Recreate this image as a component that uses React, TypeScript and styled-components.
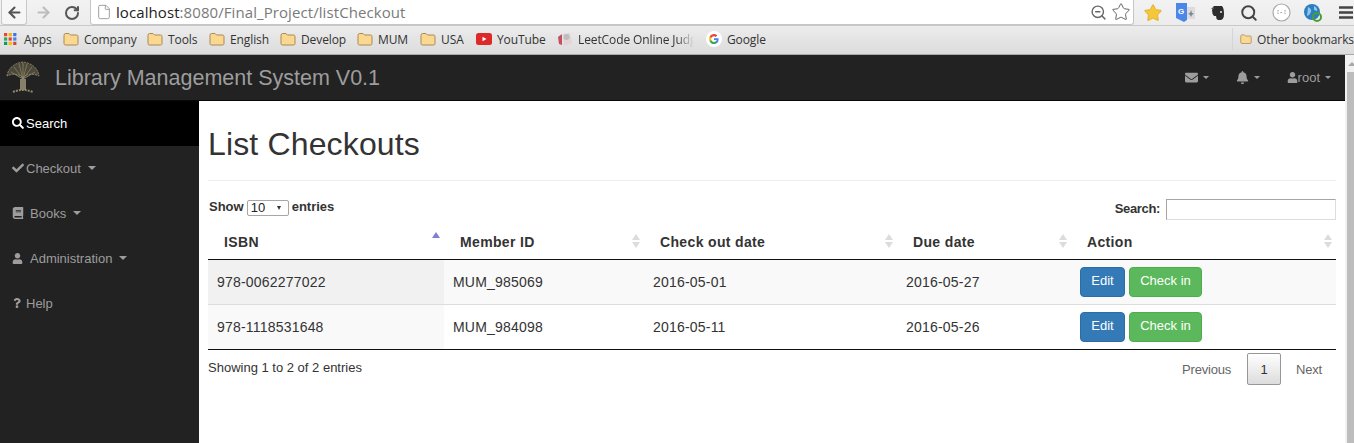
import React from "react";
import styled, { createGlobalStyle } from "styled-components";
import { FaSearch, FaCheck, FaBook, FaUser, FaQuestion, FaEnvelope, FaBell } from "react-icons/fa";
import { ArrowLeft, ArrowRight, RotateCw, Search as SearchIcon, Star, File as FileIcon, ZoomOut } from "lucide-react";

const Global = createGlobalStyle`
  html, body { margin: 0; padding: 0; width: 1354px; height: 443px; overflow: hidden; background: #fff; }
  * { box-sizing: border-box; }
  body { font-family: "Liberation Sans", Arial, sans-serif; font-size: 14px; color: #333; }
`;

const Page = styled.div`
  width: 1354px; height: 443px; display: flex; flex-direction: column; overflow: hidden;
`;
const Toolbar = styled.div`
  height: 26px; flex: none; display: flex; align-items: flex-start;
  background: linear-gradient(#f2f2f2, #ececec);
  padding-left: 1px;
`;
const NavButton = styled.div<{ $active?: boolean }>`
  width: 26px; height: 25px; display: flex; align-items: center; justify-content: center; flex: none;
  margin-right: 3px;
  border-radius: 0 0 3px 3px;
  color: ${p => (p.$active ? "#555" : "#bdbdbd")};
  ${p => p.$active && "background:#f6f6f6;border:1px solid #c8c8c8;border-top:0;"}
`;
const PlainNav = styled(NavButton)`
  color: ${p => (p.$active ? "#555" : "#bdbdbd")}; background: none; border: 0;
`;
const Omnibox = styled.div`
  margin-left: 2px; width: 1044px; height: 25px; background: #fff; border: 1px solid #c6c6c6; border-top: 0;
  border-radius: 0 0 3px 3px; display: flex; align-items: center; padding: 0 2px 0 5px;
  font-family: "Open Sans", sans-serif; font-size: 15px; letter-spacing: 0.08px; color: #7a7a7a; white-space: nowrap;
`;
const PageGlyph = styled.span`
  display: flex; width: 20px; color: #999; flex: none;
`;
const Host = styled.span`color: #222;`;
const OmniActions = styled.span`
  margin-left: auto; display: flex; align-items: center; gap: 4px; color: #666;
`;
const Extensions = styled.div`
  display: flex; align-items: center; height: 25px; margin-left: 6px;
`;
const Ext = styled.span<{ $w: number }>`
  width: ${p => p.$w}px; display: flex; justify-content: center; align-items: center; flex: none;
`;
const MenuExt = styled(Ext)`
  justify-content: flex-end; padding-right: 1px;
`;
const Bookmarks = styled.div`
  height: 30px; flex: none; display: flex; align-items: center; padding: 0 0 2px 4px;
  background: linear-gradient(#ececec, #dcdcdc); border-top: 1px solid #c8c8c8; border-bottom: 1px solid #a9a9a9;
  margin-top: -1px;
  font-family: "Open Sans", sans-serif; font-size: 12px; letter-spacing: -0.1px; color: #333; white-space: nowrap;
`;
const Bookmark = styled.span<{ $w: number }>`
  display: flex; align-items: center; width: ${p => p.$w}px; flex: none; gap: 5px; overflow: hidden;
`;
const Faded = styled.span`
  width: 116px; overflow: hidden; flex: none;
  -webkit-mask-image: linear-gradient(90deg, #000 85%, transparent);
  mask-image: linear-gradient(90deg, #000 85%, transparent);
`;
const OtherBookmarks = styled.span`
  margin-left: auto; display: flex; align-items: center; gap: 5px; border-left: 1px solid #cfd6dc; padding-left: 7px; height: 22px; width: 122px; flex: none; overflow: hidden;
`;
const Site = styled.div`
  flex: 1; display: flex; min-height: 0;
`;
const Content = styled.div`
  flex: 1; min-width: 0; display: flex; flex-direction: column;
`;
const Scrollbar = styled.div`
  width: 9px; flex: none; background: #f1f1f1; padding-left: 2px; display: flex; flex-direction: column;
`;
const ScrollArrow = styled.div`
  flex: none; margin: 7px 0 0 1px; width: 0; height: 0; border-left: 4px solid transparent; border-right: 4px solid transparent; border-bottom: 4px solid #a8a8a8;
`;
const ScrollThumb = styled.div`
  margin-top: 6px; width: 100%; flex: 1; background: #bdbdbd;
`;
const Navbar = styled.div`
  height: 46px; flex: none; display: flex; align-items: center; background: #222; border-bottom: 1px solid #080808; color: #9d9d9d;
`;
const Logo = styled.svg`
  width: 38px; height: 38px; margin-left: 4px; flex: none;
`;
const Brand = styled.div`
  margin-left: 13px; font-size: 21.5px; line-height: 46px; white-space: nowrap;
`;
const NavRight = styled.div`
  margin-left: auto; display: flex; align-items: center; padding-right: 14px; font-size: 13px;
`;
const NavItem = styled.span<{ $gap: number }>`
  display: flex; align-items: center; margin-left: ${p => p.$gap}px;
`;
const Caret = styled.span<{ $size?: number; $left?: number }>`
  display: inline-block; width: 0; height: 0; margin-left: ${p => p.$left ?? 5}px;
  border-left: ${p => p.$size ?? 3}px solid transparent; border-right: ${p => p.$size ?? 3}px solid transparent;
  border-top: ${p => p.$size ?? 3}px solid currentColor;
`;
const Body = styled.div`
  flex: 1; display: flex; min-height: 0;
`;
const Sidebar = styled.aside`
  width: 199px; flex: none; background: #222; color: #9d9d9d; font-size: 13px;
`;
const SideItem = styled.div<{ $active?: boolean }>`
  height: 45px; display: flex; align-items: center; padding: 0 0 1px 12px; white-space: nowrap;
  ${p => p.$active ? "background:#000;color:#fff;" : ""}
`;
const SideIcon = styled.span<{ $w: number }>`
  display: flex; width: ${p => p.$w}px; flex: none;
`;
const Main = styled.main`
  flex: 1; min-width: 0; padding: 0 9px; background: #fff;
`;
const Title = styled.h1`
  margin: 0; height: 80px; padding-top: 25px; border-bottom: 1px solid #eee; font-size: 32px; letter-spacing: 0.15px; font-weight: 400; line-height: 36px; color: #333;
`;
const Controls = styled.div`
  display: flex; justify-content: space-between; align-items: flex-start; height: 43px; padding-top: 17px; padding-left: 1px; font-size: 13px; font-weight: 700;
`;
const ControlLabel = styled.label`
  display: flex; align-items: center; gap: 3px; line-height: 18px;
`;
const SearchLabel = styled(ControlLabel)`
  gap: 4px; letter-spacing: -0.35px;
`;
const FakeSelect = styled.span`
  width: 42px; height: 16px; border: 1px solid #a6a6a6; border-radius: 2px; display: flex; align-items: center; justify-content: space-between; padding: 0 7px 0 3px; font-weight: 400; font-size: 13px; color: #222; margin-top: 1px;
`;
const SelectArrow = styled.span`
  width: 0; height: 0; border-left: 2.5px solid transparent; border-right: 2.5px solid transparent; border-top: 4px solid #333;
`;
const SearchField = styled.span`
  width: 170px; height: 21px; margin-left: 2px; margin-top: 1px; background: #fff; border: 1px solid #ddd; border-top-color: #a5a5a5; border-left-color: #a5a5a5;
`;
const Table = styled.table`
  width: 100%; border-collapse: separate; border-spacing: 0; table-layout: fixed; font-size: 14px;
`;
const Head = styled.th<{ $w: number }>`
  width: ${p => p.$w}px; height: 36px; padding: 0 0 0 16px; text-align: left; font-weight: 700; letter-spacing: 0.35px; border-bottom: 1px solid #111; position: relative;
`;
const Sort = styled.svg<{ $active?: boolean }>`
  position: absolute; right: 4px; top: ${p => (p.$active ? 8 : 10)}px; width: 8px; height: 14px;
`;
const Row = styled.tr<{ $odd: boolean }>`
  background: ${p => (p.$odd ? "#f9f9f9" : "#fff")};
`;
const Cell = styled.td<{ $sorted?: boolean; $odd?: boolean; $last?: boolean }>`
  height: 45px; padding: 0 0 0 9px; vertical-align: middle; color: #333; letter-spacing: 0.2px;
  border-bottom: 1px solid ${p => (p.$last ? "#111" : "#ddd")};
  ${p => p.$sorted && `background: ${p.$odd ? "#f1f1f1" : "#f9f9f9"};`}
`;
const Btn = styled.span<{ $green?: boolean }>`
  display: inline-flex; align-items: center; justify-content: center; height: 30px; width: ${p => (p.$green ? 73 : 45)}px; padding-bottom: 4px; margin-right: 4px; border-radius: 4px; color: #fff; font-size: 13px; letter-spacing: 0; white-space: nowrap;
  background: ${p => (p.$green ? "#5cb85c" : "#337ab7")}; border: 1px solid ${p => (p.$green ? "#4cae4c" : "#2e6da4")};
`;
const Footer = styled.div`
  display: flex; justify-content: space-between; align-items: flex-start; padding-top: 3px; color: #333; font-size: 13px;
`;
const Info = styled.span`
  margin-top: 6px; line-height: 18px; font-size: 13px;
`;
const Pager = styled.div`
  display: flex; align-items: center; color: #666; font-size: 13px; letter-spacing: -0.2px; padding-right: 14px;
`;
const PageNumber = styled.span`
  width: 34px; height: 32px; margin: 0 15px 0 16px; display: flex; align-items: center; justify-content: center; color: #333; border: 1px solid #979797; border-radius: 2px; background: linear-gradient(#fff, #dcdcdc);
`;

const Folder = () => (
  <svg width="16" height="14" viewBox="0 0 16 14">
    <path d="M1 3.5 Q1 1.5 2.5 1.5 H6 L7.5 3 H13.5 Q15 3 15 4.5 V11.5 Q15 13 13.5 13 H2.5 Q1 13 1 11.5 Z" fill="#fbd88f" stroke="#a8895a" strokeWidth="1" />
  </svg>
);
const AppsGrid = () => (
  <svg width="15" height="14" viewBox="0 0 15 14">
    {["#e8453c","#f4b400","#3b78e7","#34a853","#ea4335","#4285f4","#0f9d58","#fbbc05","#db4437"].map((c, i) => (
      <rect key={i} x={(i % 3) * 4.6} y={1 + Math.floor(i / 3) * 4.4} width="3.2" height="3.2" fill={c} />
    ))}
  </svg>
);
const YouTube = () => (
  <svg width="16" height="12" viewBox="0 0 16 12">
    <rect width="16" height="12" rx="2.5" fill="#dc2a2a" />
    <path d="M6.5 3.8 L10.5 6 L6.5 8.2Z" fill="#fff" />
  </svg>
);
const Leet = () => (
  <svg width="16" height="16" viewBox="0 0 16 16">
    <path d="M1 6 L5 3 L5 14 L2 13Z" fill="#c2505e" />
    <path d="M6 3 L13 2 L15 12 L7 15Z" fill="#e5d3d5" />
    <circle cx="9.5" cy="6" r="3" fill="#bdbdbd" />
  </svg>
);
const GoogleG = () => (
  <svg width="16" height="16" viewBox="0 0 16 16">
    <circle cx="8" cy="8" r="8" fill="#fff" />
    <path d="M12.6 8.2c0-.4 0-.7-.1-1H8v1.8h2.6c-.1.7-.5 1.200-1 1.600v1.300h1.600c1-.9 1.400-2.200 1.400-3.700z" fill="#4285f4" />
    <path d="M8 13c1.300 0 2.400-.4 3.200-1.200l-1.600-1.200c-.4.300-1 .5-1.600.5-1.300 0-2.300-.8-2.700-2H3.700v1.300C4.500 12 6.100 13 8 13z" fill="#34a853" />
    <path d="M5.300 9.100c-.2-.7-.2-1.400 0-2.100V5.600H3.700c-.7 1.300-.7 3.100 0 4.800z" fill="#fbbc05" />
    <path d="M8 5.200c.7 0 1.300.2 1.800.7l1.400-1.400C10.400 3.500 9.300 3 8 3 6.100 3 4.500 4 3.700 5.600L5.300 7c.4-1.100 1.400-1.800 2.700-1.800z" fill="#ea4335" />
  </svg>
);
const Tree = () => (
  <Logo viewBox="0 0 38 38">
    <g stroke="#8d8668" fill="none" strokeWidth="1">
      <path d="M19 31 V18 M17 31 L17 20 M21 31 V20" strokeWidth="1.400" stroke="#b0a985" />
      <path d="M19 20 L7 13 M19 20 L10 8 M19 20 L15 5 M19 20 L19 4 M19 20 L23 5 M19 20 L28 8 M19 20 L31 13" />
      <path d="M3 17 Q5 5 19 3 Q33 5 35 17 Q27 13 19 18 Q11 13 3 17Z" fill="#6f6a50" fillOpacity=".55" strokeDasharray="2 1" />
      <path d="M9 33 Q19 29 29 33" strokeWidth="2" strokeDasharray="2 1" />
    </g>
  </Logo>
);
const SortIcon = ({ active }: { active?: boolean }) =>
  active ? (
    <Sort $active viewBox="0 0 8 14"><path d="M0 6 L4 0 L8 6Z" fill="#8080d0" /></Sort>
  ) : (
    <Sort viewBox="0 0 8 14">
      <path d="M0 6 L4 0 L8 6Z M0 8 L8 8 L4 14Z" fill="#dcdcdc" />
    </Sort>
  );

const rows = [
  ["978-0062277022", "MUM_985069", "2016-05-01", "2016-05-27"],
  ["978-1118531648", "MUM_984098", "2016-05-11", "2016-05-26"],
];
const heads: [string, number][] = [
  ["ISBN", 236],
  ["Member ID", 200],
  ["Check out date", 253],
  ["Due date", 174],
  ["Action", 265],
];

export default function App() {
  return (
    <Page>
      <Global />
      <Toolbar>
        <NavButton $active><ArrowLeft size={17} strokeWidth={3} /></NavButton>
        <PlainNav><ArrowRight size={17} strokeWidth={3} /></PlainNav>
        <PlainNav $active><RotateCw size={16} strokeWidth={3} /></PlainNav>
        <Omnibox>
          <PageGlyph><FileIcon size={16} strokeWidth={1.400} /></PageGlyph>
          <Host>localhost</Host>:8080/Final_Project/listCheckout
          <OmniActions>
            <ZoomOut size={17} strokeWidth={2} />
            <Star size={20} strokeWidth={1.200} />
          </OmniActions>
        </Omnibox>
        <Extensions>
          <Ext $w={26}><Star size={20} fill="#f6c73c" color="#e0a81e" strokeWidth={1} /></Ext>
          <Ext $w={38}>
            <svg width="19" height="19" viewBox="0 0 19 19">
              <path d="M11 4 H19 V16 H11Z" fill="#dcdcdc" />
              <path d="M0 0 H11 V17 L8 19 L0 15Z" fill="#4c86e8" />
              <text x="2" y="11" fontSize="8" fontWeight="700" fill="#fff" fontFamily="Liberation Sans">G</text>
              <path d="M15 7 L16 10 L18 10.500 L16 12 L15 14 L14 12 L12 10.500 L14 10Z" fill="#7a8a96" />
            </svg>
          </Ext>
          <Ext $w={28}>
            <svg width="14" height="16" viewBox="0 0 14 16">
              <path d="M3 1 H11 Q13 3 13 9 Q13 15 9 15 H7 Q5 14 5 11 H3 Q1 9 1 5Z" fill="#2d2d2d" />
              <circle cx="10" cy="7" r="1" fill="#eee" />
              <path d="M0 4 L3 1 V4Z" fill="#555" />
            </svg>
          </Ext>
          <Ext $w={34}><SearchIcon size={18} color="#444" strokeWidth={2.600} /></Ext>
          <Ext $w={30}>
            <svg width="19" height="19" viewBox="0 0 19 19">
              <circle cx="9.500" cy="9.500" r="8.500" fill="#fff" stroke="#aaa" strokeWidth="1.200" />
              <path d="M6 7 V12 M13 7 V12 M8.500 9.500 H10.500" stroke="#999" strokeWidth="1" strokeDasharray="1.500 1" />
            </svg>
          </Ext>
          <Ext $w={34}>
            <svg width="18" height="18" viewBox="0 0 18 18">
              <circle cx="8" cy="8" r="8" fill="#2d7dc2" />
              <path d="M4 3 Q8 5 7 8 T3 12Z M10 2 Q14 4 13 7 L10 6Z" fill="#8fc7e8" />
              <circle cx="13" cy="13" r="4" fill="none" stroke="#47a02f" strokeWidth="2" />
            </svg>
          </Ext>
          <MenuExt $w={24}>
            <svg width="14" height="13" viewBox="0 0 14 13">
              <path d="M0 1.500 H14 M0 6.500 H14 M0 11.500 H14" stroke="#444" strokeWidth="2.600" />
            </svg>
          </MenuExt>
        </Extensions>
      </Toolbar>
      <Bookmarks>
        <Bookmark $w={59}><AppsGrid /> Apps</Bookmark>
        <Bookmark $w={84}><Folder /> Company</Bookmark>
        <Bookmark $w={62}><Folder /> Tools</Bookmark>
        <Bookmark $w={71}><Folder /> English</Bookmark>
        <Bookmark $w={77}><Folder /> Develop</Bookmark>
        <Bookmark $w={63}><Folder /> MUM</Bookmark>
        <Bookmark $w={56}><Folder /> USA</Bookmark>
        <Bookmark $w={81}><YouTube /> YouTube</Bookmark>
        <Bookmark $w={149}><Leet /><Faded>LeetCode Online Judge</Faded></Bookmark>
        <Bookmark $w={80}><GoogleG /> Google</Bookmark>
        <OtherBookmarks><Folder /> Other bookmarks</OtherBookmarks>
      </Bookmarks>
      <Site>
        <Content>
          <Navbar>
            <Tree />
            <Brand>Library Management System V0.1</Brand>
            <NavRight>
              <NavItem $gap={0}><FaEnvelope size={13} /><Caret /></NavItem>
              <NavItem $gap={27}><FaBell size={13} /><Caret /></NavItem>
              <NavItem $gap={27}><FaUser size={11} />root<Caret /></NavItem>
            </NavRight>
          </Navbar>
          <Body>
            <Sidebar>
              <SideItem $active><SideIcon $w={14}><FaSearch size={12} /></SideIcon>Search</SideItem>
              <SideItem><SideIcon $w={14}><FaCheck size={12} /></SideIcon>Checkout<Caret $left={7} $size={4} /></SideItem>
              <SideItem><SideIcon $w={18}><FaBook size={12} /></SideIcon>Books<Caret $left={7} $size={4} /></SideItem>
              <SideItem><SideIcon $w={18}><FaUser size={11} /></SideIcon>Administration<Caret $left={7} $size={4} /></SideItem>
              <SideItem><SideIcon $w={14}><FaQuestion size={10} /></SideIcon>Help</SideItem>
            </Sidebar>
            <Main>
              <Title>List Checkouts</Title>
              <Controls>
                <ControlLabel>Show <FakeSelect>10<SelectArrow /></FakeSelect> entries</ControlLabel>
                <SearchLabel>Search: <SearchField /></SearchLabel>
              </Controls>
              <Table>
                <thead>
                  <tr>
                    {heads.map(([h, w], i) => (
                      <Head key={h} $w={w}>{h}<SortIcon active={i === 0} /></Head>
                    ))}
                  </tr>
                </thead>
                <tbody>
                  {rows.map((r, i) => {
                    const odd = i === 0;
                    const last = i === rows.length - 1;
                    return (
                      <Row key={r[0]} $odd={odd}>
                        {r.map((c, j) => (
                          <Cell key={c} $sorted={j === 0} $odd={odd} $last={last}>{c}</Cell>
                        ))}
                        <Cell $last={last}><Btn>Edit</Btn><Btn $green>Check in</Btn></Cell>
                      </Row>
                    );
                  })}
                </tbody>
              </Table>
              <Footer>
                <Info>Showing 1 to 2 of 2 entries</Info>
                <Pager>Previous<PageNumber>1</PageNumber>Next</Pager>
              </Footer>
            </Main>
          </Body>
        </Content>
        <Scrollbar><ScrollArrow /><ScrollThumb /></Scrollbar>
      </Site>
    </Page>
  );
}
